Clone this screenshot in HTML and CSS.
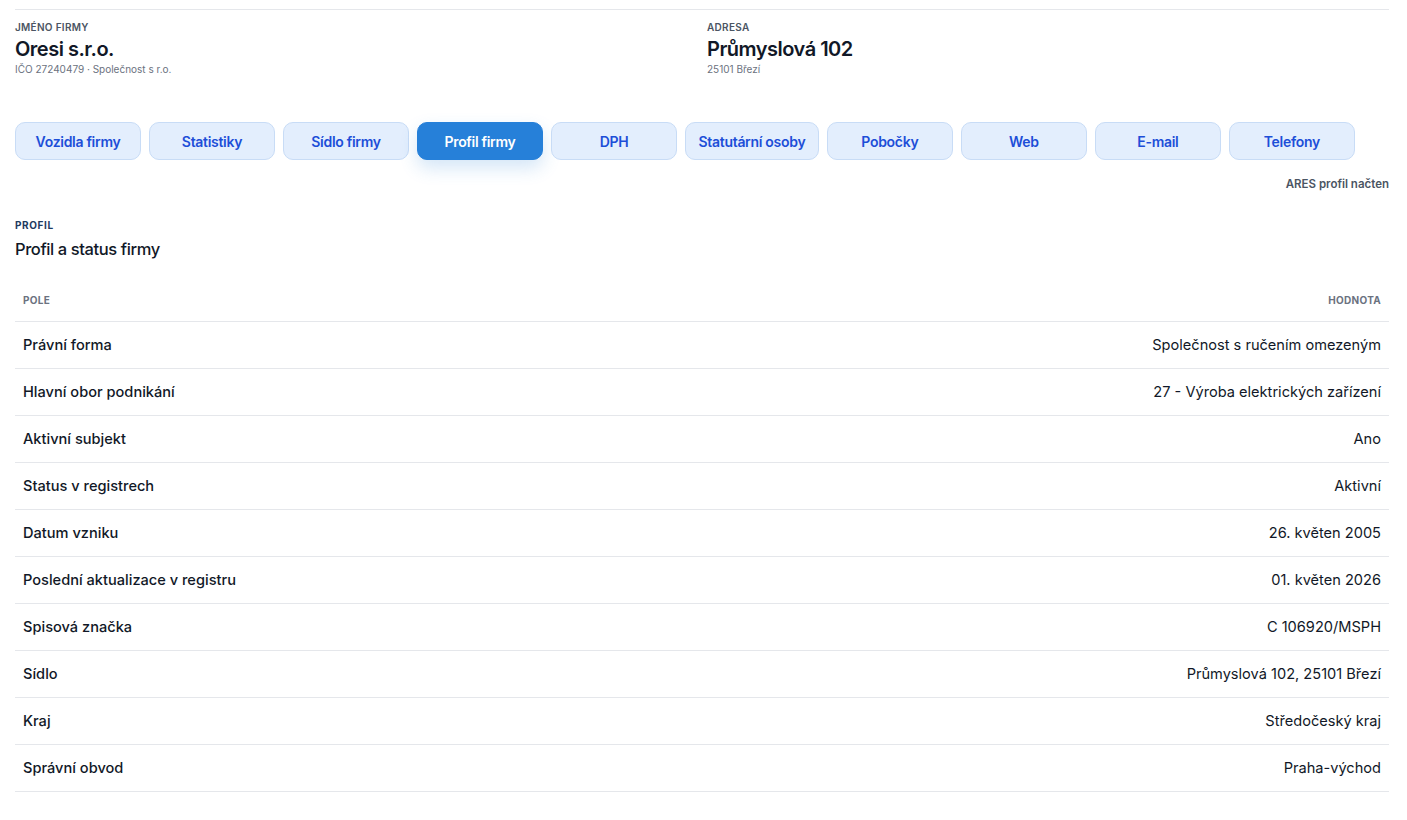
FILE: index.html
```html
<!DOCTYPE html>
<html lang="cs">
<head>
    <meta charset="UTF-8">
    <meta name="viewport" content="width=device-width, initial-scale=1.0">
    <title>Oresi s.r.o. - profil firmy</title>
    <link rel="stylesheet" href="styles.css">
</head>
<body>
    <div class="page">
        <div class="company-head">
            <div class="head-col">
                <div class="head-label">Jméno firmy</div>
                <div class="head-value">Oresi s.r.o.</div>
                <div class="head-sub">IČO 27240479 · Společnost s r.o.</div>
            </div>
            <div class="head-col">
                <div class="head-label">Adresa</div>
                <div class="head-value">Průmyslová 102</div>
                <div class="head-sub">25101 Březí</div>
            </div>
        </div>

        <div class="tabs">
            <button class="tab">Vozidla firmy</button>
            <button class="tab">Statistiky</button>
            <button class="tab">Sídlo firmy</button>
            <button class="tab active">Profil firmy</button>
            <button class="tab">DPH</button>
            <button class="tab">Statutární osoby</button>
            <button class="tab">Pobočky</button>
            <button class="tab">Web</button>
            <button class="tab">E-mail</button>
            <button class="tab">Telefony</button>
        </div>

        <div class="status">ARES profil načten</div>

        <div class="section-label">Profil</div>
        <h2 class="section-title">Profil a status firmy</h2>

        <table class="profile-table">
            <thead>
                <tr>
                    <th>Pole</th>
                    <th class="right">Hodnota</th>
                </tr>
            </thead>
            <tbody>
                <tr><td class="key">Právní forma</td><td class="right">Společnost s ručením omezeným</td></tr>
                <tr><td class="key">Hlavní obor podnikání</td><td class="right">27 - Výroba elektrických zařízení</td></tr>
                <tr><td class="key">Aktivní subjekt</td><td class="right">Ano</td></tr>
                <tr><td class="key">Status v registrech</td><td class="right">Aktivní</td></tr>
                <tr><td class="key">Datum vzniku</td><td class="right">26. květen 2005</td></tr>
                <tr><td class="key">Poslední aktualizace v registru</td><td class="right">01. květen 2026</td></tr>
                <tr><td class="key">Spisová značka</td><td class="right">C 106920/MSPH</td></tr>
                <tr><td class="key">Sídlo</td><td class="right">Průmyslová 102, 25101 Březí</td></tr>
                <tr><td class="key">Kraj</td><td class="right">Středočeský kraj</td></tr>
                <tr><td class="key">Správní obvod</td><td class="right">Praha-východ</td></tr>
            </tbody>
        </table>
    </div>
</body>
</html>
```

FILE: styles.css
```css
body {
    margin: 0;
    font-family: Inter, "Noto Sans", "Liberation Sans", sans-serif;
    color: #111827;
    background: #ffffff;
}
.page {
    padding: 9px 18px 20px 15px;
}
.company-head {
    display: grid;
    grid-template-columns: 1fr 1fr;
    gap: 10px;
    border-top: 1px solid #e5e7eb;
    padding-top: 11px;
}
.head-label {
    font-size: 10px;
    font-weight: 600;
    text-transform: uppercase;
    letter-spacing: 0.3px;
    color: #4b5563;
    line-height: 12px;
}
.head-value {
    font-size: 20px;
    font-weight: 600;
    letter-spacing: -0.5px;
    line-height: 28px;
    margin-top: 2px;
}
.head-sub {
    font-size: 10px;
    color: #6b7280;
    line-height: 12px;
    margin-top: 0;
}
.tabs {
    display: flex;
    flex-wrap: wrap;
    gap: 8px;
    margin-top: 47px;
}
.tab {
    min-width: 126px;
    height: 38px;
    padding: 0 12.5px;
    border: 1px solid #c8dcf6;
    border-radius: 10px;
    background: #e3eefd;
    color: #1d4ed8;
    font-family: inherit;
    font-size: 14px;
    font-weight: 600;
    letter-spacing: -0.3px;
}
.tab.active {
    background: #2680d9;
    border-color: #2680d9;
    color: #ffffff;
    box-shadow: 0 8px 18px rgba(38, 128, 217, 0.2);
}
.status {
    text-align: right;
    font-size: 11.5px;
    font-weight: 600;
    color: #4b5563;
    margin-top: 17px;
    line-height: 14px;
}
.section-label {
    font-size: 10px;
    font-weight: 700;
    letter-spacing: 0.6px;
    text-transform: uppercase;
    color: #1e3a5f;
    margin-top: 27px;
    line-height: 14px;
}
.section-title {
    font-size: 16.5px;
    font-weight: 500;
    letter-spacing: -0.4px;
    margin: 6px 0 0;
    line-height: 22px;
}
.profile-table {
    width: 100%;
    border-collapse: collapse;
    margin-top: 19px;
}
.profile-table th {
    font-size: 10px;
    font-weight: 700;
    letter-spacing: 0.3px;
    text-transform: uppercase;
    color: #6b7280;
    text-align: left;
    padding: 15px 8px;
    line-height: 12px;
    border-bottom: 1px solid #e5e7eb;
}
.profile-table td {
    font-size: 14.6px;
    padding: 0 8px;
    height: 46px;
    border-bottom: 1px solid #e5e7eb;
    color: #111827;
}
.profile-table td.key {
    font-weight: 500;
}
.profile-table .right {
    text-align: right;
}
```
